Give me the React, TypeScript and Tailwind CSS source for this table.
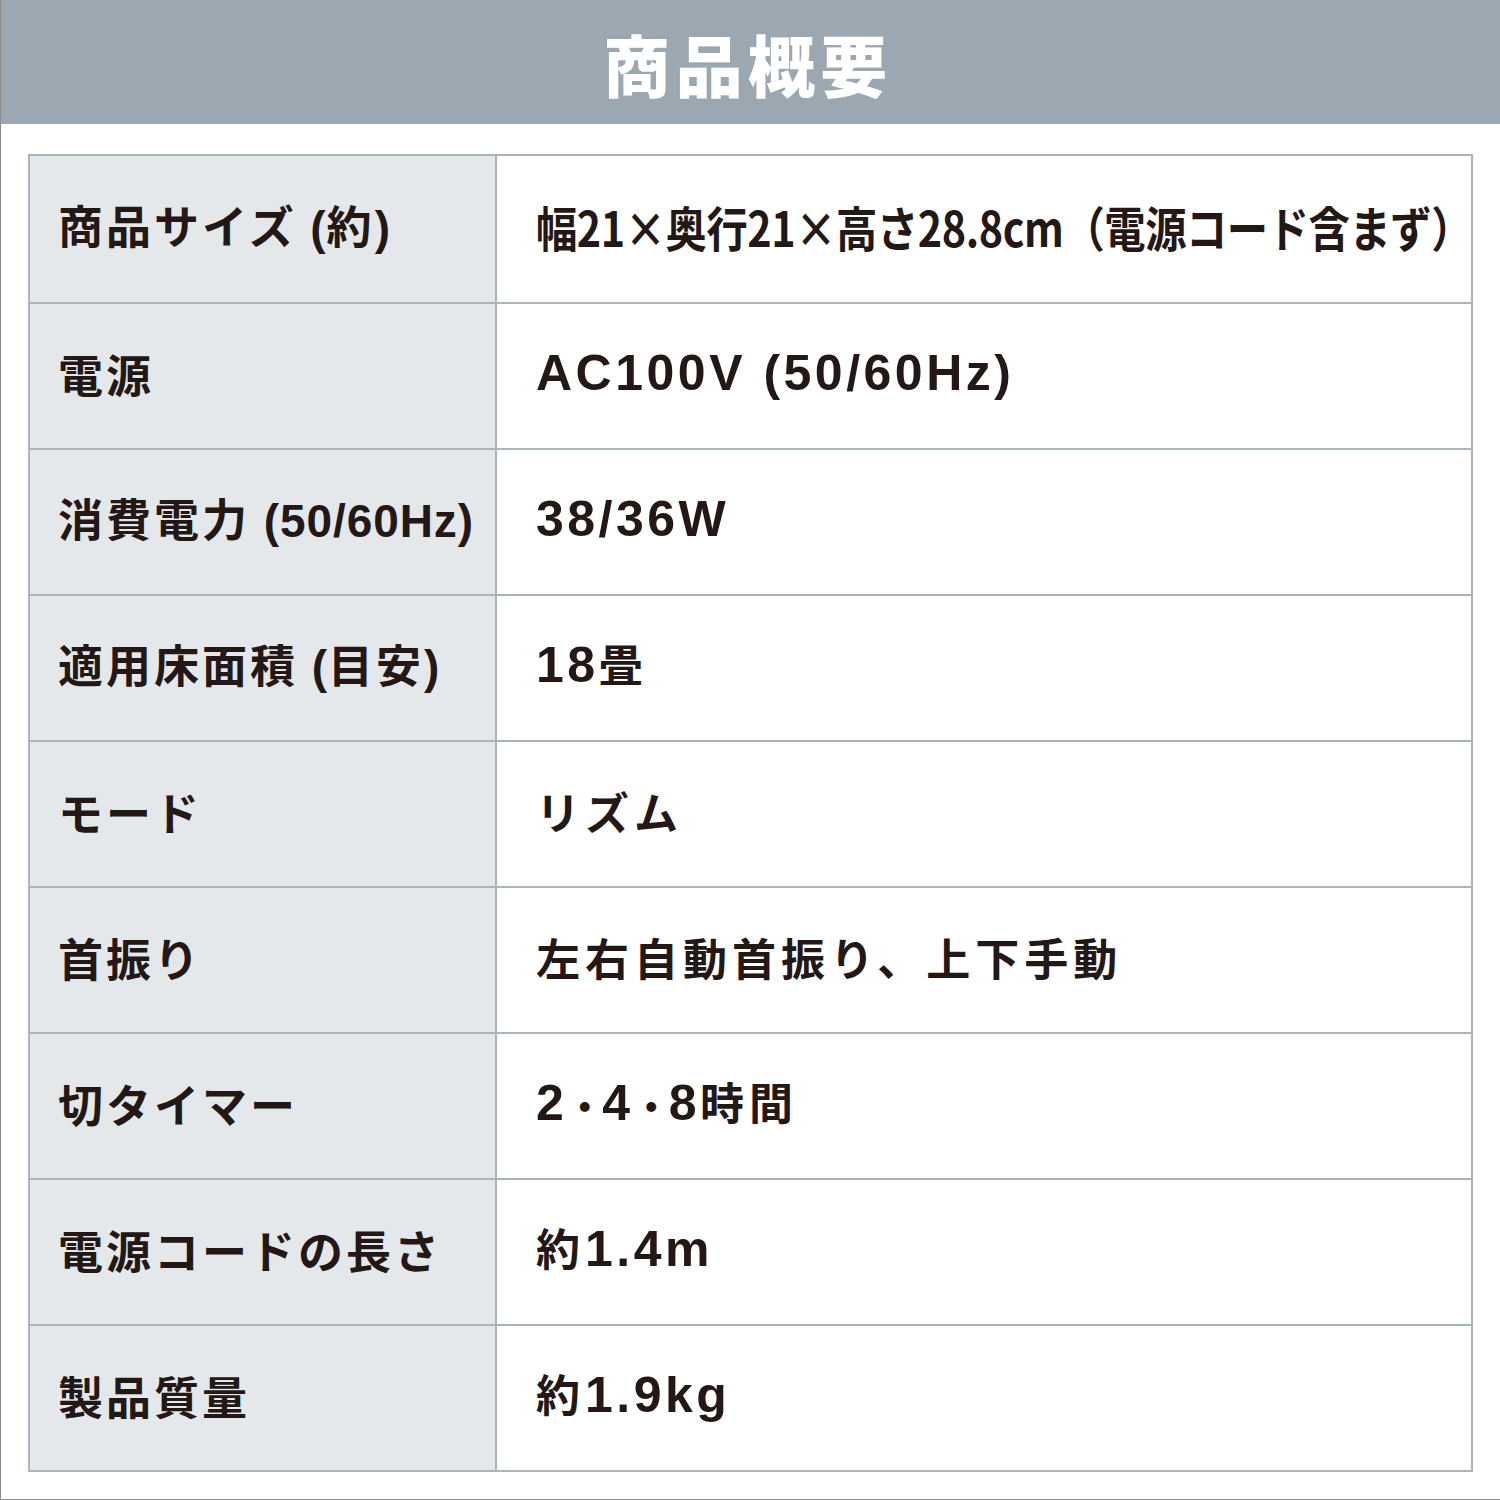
type Row = { label: string; value: string; condensed?: boolean };

const rows: Row[] = [
  { label: '商品サイズ (約)', value: '幅21×奥行21×高さ28.8cm（電源コード含まず）', condensed: true },
  { label: '電源', value: 'AC100V (50/60Hz)' },
  { label: '消費電力 (50/60Hz)', value: '38/36W' },
  { label: '適用床面積 (目安)', value: '18畳' },
  { label: 'モード', value: 'リズム' },
  { label: '首振り', value: '左右自動首振り、上下手動' },
  { label: '切タイマー', value: '2・4・8時間' },
  { label: '電源コードの長さ', value: '約1.4m' },
  { label: '製品質量', value: '約1.9kg' },
];

const latinFont = { fontFamily: '"Liberation Sans", Arial, sans-serif' };

// split text into latin / CJK runs so each gets its own font and size
function Mixed({ text, latin, cjk, dot }: { text: string; latin: string; cjk: string; dot?: string }) {
  const parts = text.split(/([\x20-\x7E]+|・)/).filter(Boolean);
  return (
    <>
      {parts.map((p, i) => {
        if (/^[\x20-\x7E]+$/.test(p))
          return (
            <span key={i} className={latin} style={latinFont}>
              {p}
            </span>
          );
        if (p === '・')
          return (
            <span key={i} className={dot ?? cjk}>
              {p}
            </span>
          );
        return (
          <span key={i} className={cjk}>
            {p}
          </span>
        );
      })}
    </>
  );
}

export default function App() {
  return (
    <div
      className="w-[1500px] h-[1500px] bg-white border-l border-b border-[#8a8a8a] overflow-hidden text-[#231815]"
      style={{ fontFamily: '"Noto Sans CJK JP", "Noto Sans", sans-serif' }}
    >
      <div className="h-[124px] bg-[#9ca8b1] flex items-center justify-center">
        <h1 className="text-white font-black text-[67px] tracking-[0.08em] leading-none pr-[5px]">商品概要</h1>
      </div>

      <div className="ml-[27px] mt-[30px] w-[1445px] border-2 border-[#aab4bc]">
        {rows.map((row, i) => (
          <div
            key={row.label}
            className={`flex h-[146px] ${i > 0 ? 'border-t-2 border-[#aab4bc]' : ''}`}
          >
            <div className="w-[467px] shrink-0 bg-[#e5e8eb] border-r-2 border-[#aab4bc] flex items-center pl-[28px] pb-[6px]">
              <span className="font-bold whitespace-nowrap leading-none">
                <Mixed
                  text={row.label}
                  latin="text-[46px] tracking-[0.02em]"
                  cjk="text-[45px] tracking-[3px]"
                />
              </span>
            </div>
            <div className="flex-1 flex items-center pl-[39px] pb-[6px]">
              {row.condensed ? (
                <span className="font-bold text-[48px] whitespace-nowrap leading-none inline-block origin-left scale-x-[0.86] tracking-[-0.01em]">
                  {row.value}
                </span>
              ) : (
                <span className="font-bold whitespace-nowrap leading-none">
                  <Mixed
                    text={row.value}
                    latin="text-[50px] tracking-[3.5px]"
                    cjk="text-[44px] tracking-[5px]"
                    dot="text-[35px] font-black"
                  />
                </span>
              )}
            </div>
          </div>
        ))}
      </div>
    </div>
  );
}
